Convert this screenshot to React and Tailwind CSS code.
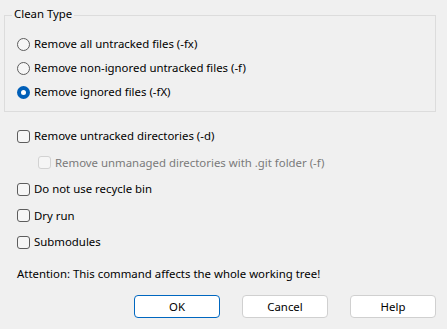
import React from 'react';

const Radio = ({ checked, label }) => (
  <div className="flex items-center h-[24px]">
    {checked ? (
      <span className="w-[13px] h-[13px] rounded-full bg-[#005fb8] flex items-center justify-center">
        <span className="w-[5px] h-[5px] rounded-full bg-white"></span>
      </span>
    ) : (
      <span className="w-[13px] h-[13px] rounded-full border border-[#5d5d5d] bg-[#f6f6f6]"></span>
    )}
    <span className="ml-[4px] text-black">{label}</span>
  </div>
);

const Check = ({ label, disabled, className = '' }) => (
  <div className={`flex items-center ${className}`}>
    <span
      className={
        disabled
          ? 'w-[13px] h-[13px] rounded-[3px] border border-[#d2d2d2] bg-[#f5f5f5]'
          : 'w-[13px] h-[13px] rounded-[3px] border border-[#5d5d5d] bg-[#f6f6f6]'
      }
    ></span>
    <span className={disabled ? 'ml-[4px] text-[#7a7a7a]' : 'ml-[4px] text-black'}>{label}</span>
  </div>
);

const Button = ({ children, primary }) => (
  <button
    className={
      primary
        ? 'w-[86px] h-[23px] rounded-[4px] border border-[#0067c0] bg-white text-black'
        : 'w-[86px] h-[23px] rounded-[4px] border border-[#d0d0d0] bg-white text-black'
    }
  >
    {children}
  </button>
);

export default function App() {
  return (
    <div
      className="w-[447px] h-[329px] bg-[#f0f0f0] text-[11.4px] leading-none pt-[15px] pl-[4px]"
      style={{ fontFamily: '"Noto Sans", "Open Sans", sans-serif' }}
    >
      {/* Clean Type group */}
      <div className="relative w-[432px] h-[97px] border border-[#dcdcdc] pt-[16px] pl-[12px]">
        <span className="absolute -top-[8px] left-[7px] px-[2px] bg-[#f0f0f0] text-black">Clean Type</span>
        <Radio label="Remove all untracked files (-fx)" />
        <Radio label="Remove non-ignored untracked files (-f)" />
        <Radio checked label="Remove ignored files (-fX)" />
      </div>

      {/* Options */}
      <div className="pl-[13px] mt-[11px]">
        <Check className="h-[26px]" label="Remove untracked directories (-d)" />
        <Check className="h-[27px] pl-[21px]" disabled label="Remove unmanaged directories with .git folder (-f)" />
        <Check className="h-[26px]" label="Do not use recycle bin" />
        <Check className="h-[27px]" label="Dry run" />
        <Check className="h-[26px]" label="Submodules" />
      </div>

      <div className="pl-[13px] mt-[13px] text-black">Attention: This command affects the whole working tree!</div>

      {/* Buttons */}
      <div className="flex justify-end gap-[22px] pr-[11px] mt-[16px]">
        <Button primary>OK</Button>
        <Button>Cancel</Button>
        <Button>Help</Button>
      </div>
    </div>
  );
}
